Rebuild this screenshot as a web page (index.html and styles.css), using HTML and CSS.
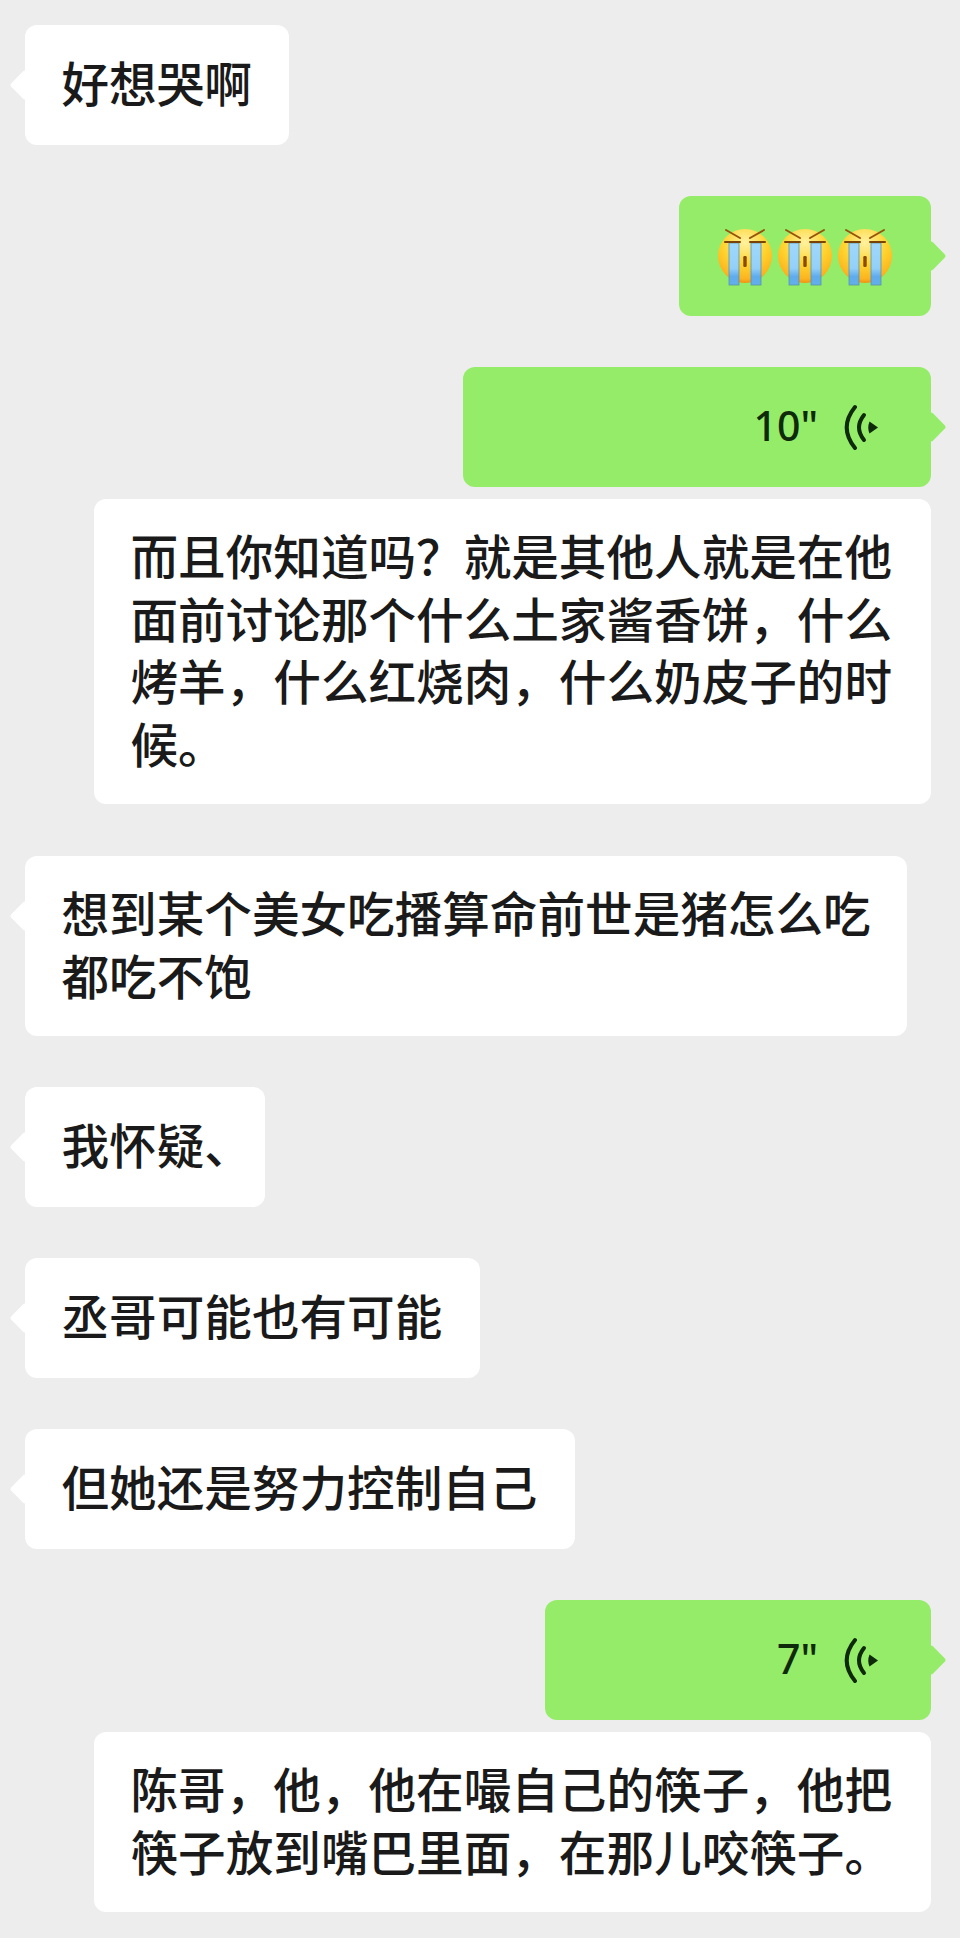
FILE: index.html
```html
<!DOCTYPE html>
<html lang="zh-CN">
<head>
    <meta charset="UTF-8">
    <title>聊天记录</title>
    <link rel="stylesheet" href="styles.css">
</head>
<body>
    <svg class="defs" width="0" height="0">
        <defs>
            <radialGradient id="faceFill" cx="50%" cy="25%" r="75%">
                <stop offset="0" stop-color="#fff2a0"/>
                <stop offset="0.55" stop-color="#ffd32e"/>
                <stop offset="0.9" stop-color="#fbb31f"/>
                <stop offset="1" stop-color="#ee9212"/>
            </radialGradient>
            <linearGradient id="tearFill" x1="0" y1="0" x2="0" y2="1">
                <stop offset="0" stop-color="#a0d8fc"/>
                <stop offset="0.6" stop-color="#93d0f9"/>
                <stop offset="0.8" stop-color="#5fabec"/>
                <stop offset="1" stop-color="#64b0ec"/>
            </linearGradient>
            <symbol id="cry" viewBox="0 0 60 60">
                <circle cx="30" cy="30" r="27" fill="url(#faceFill)"/>
                <path d="M11 4l14 8M49 4l-14 8" stroke="#96540a" stroke-width="2" stroke-linecap="round"/>
                <rect x="14" y="17" width="10" height="42" fill="url(#tearFill)" stroke="#5b94a6" stroke-width="0.8"/>
                <rect x="36" y="17" width="10" height="42" fill="url(#tearFill)" stroke="#5b94a6" stroke-width="0.8"/>
                <path d="M10 16h15M35 16h15" stroke="#7a4306" stroke-width="2" stroke-linecap="round"/>
                <rect x="28.300" y="30" width="3.400" height="11" rx="1.200" fill="#8a4a08"/>
            </symbol>
            <symbol id="wave" viewBox="0 0 36 47">
                <path d="M12 3Q-4.600 23.500 12 44" fill="none" stroke="#0f2a0a" stroke-width="4" stroke-linecap="round"/>
                <path d="M21 11Q11 23.500 21 36" fill="none" stroke="#0f2a0a" stroke-width="4" stroke-linecap="round"/>
                <path d="M26.500 17.500L35 23.500L26.500 29.500Q24 23.500 26.500 17.500Z" fill="#0f2a0a"/>
            </symbol>
        </defs>
    </svg>

    <div class="chat">
        <div class="bubble left">好想哭啊</div>

        <div class="bubble right emoji-row">
            <svg class="emoji"><use href="#cry"/></svg>
            <svg class="emoji"><use href="#cry"/></svg>
            <svg class="emoji"><use href="#cry"/></svg>
        </div>

        <div class="bubble right voice voice-long">
            <span class="seconds">10"</span>
            <svg class="wave"><use href="#wave"/></svg>
        </div>

        <div class="bubble transcript">而且你知道吗？就是其他人就是在他面前讨论那个什么土家酱香饼，什么烤羊，什么红烧肉，什么奶皮子的时候。</div>

        <div class="bubble left wide">想到某个美女吃播算命前世是猪怎么吃都吃不饱</div>
        <div class="bubble left"><span class="nowrap">我怀疑<span class="half">、</span></span></div>
        <div class="bubble left">丞哥可能也有可能</div>
        <div class="bubble left">但她还是努力控制自己</div>

        <div class="bubble right voice voice-short">
            <span class="seconds">7"</span>
            <svg class="wave"><use href="#wave"/></svg>
        </div>

        <div class="bubble transcript">陈哥，他，他在嘬自己的筷子，他把筷子放到嘴巴里面，在那儿咬筷子。</div>
    </div>
</body>
</html>
```

FILE: styles.css
```css
:root {
    --page: #ededed;
    --green: #95ec69;
    --ink: #1a1a1a;
}

body {
    margin: 0;
    background: var(--page);
    color: var(--ink);
    font-family: "Noto Sans CJK SC", "Noto Sans", sans-serif;
    font-size: 47.6px;
    font-weight: 500;
    line-height: 62.5px;
}

.defs {
    position: absolute;
}

.chat {
    display: flex;
    flex-direction: column;
    align-items: flex-start;
    gap: 51px;
    padding: 25px 29px 27px 25px;
}

.bubble {
    position: relative;
    display: flex;
    align-items: center;
    box-sizing: border-box;
    min-height: 120px;
    padding: 25px 37.5px 30px 36.5px;
    background: #fff;
    border-radius: 12px;
}

/* 气泡小三角 */
.bubble.left::before,
.bubble.right::after {
    content: "";
    position: absolute;
    top: 49px;
    width: 22px;
    height: 22px;
    background: inherit;
    border-radius: 3px;
    transform: rotate(45deg);
}

.bubble.left::before {
    left: -11px;
}

.bubble.right::after {
    right: -11px;
}

.wide {
    width: 882px;
    padding-right: 36px;
}

.nowrap {
    white-space: nowrap;
}

.half {
    margin-right: -24px;
}

.right {
    align-self: flex-end;
    background: var(--green);
}

.transcript {
    align-self: flex-end;
    width: 837px;
    margin-top: -39px;
    margin-bottom: 1px;
}

.emoji-row {
    padding: 30px 36px;
}

.emoji {
    display: block;
    width: 60px;
    height: 60px;
}

/* 语音条 */
.voice {
    justify-content: flex-end;
    gap: 25px;
    padding: 0 52px 0 0;
}

.voice-long {
    width: 468px;
}

.voice-short {
    width: 386px;
}

.seconds {
    position: relative;
    top: -2px;
    font-family: "Noto Sans", sans-serif;
    font-size: 41px;
    color: #0f2a0a;
}

.wave {
    display: block;
    width: 36px;
    height: 47px;
}
```
